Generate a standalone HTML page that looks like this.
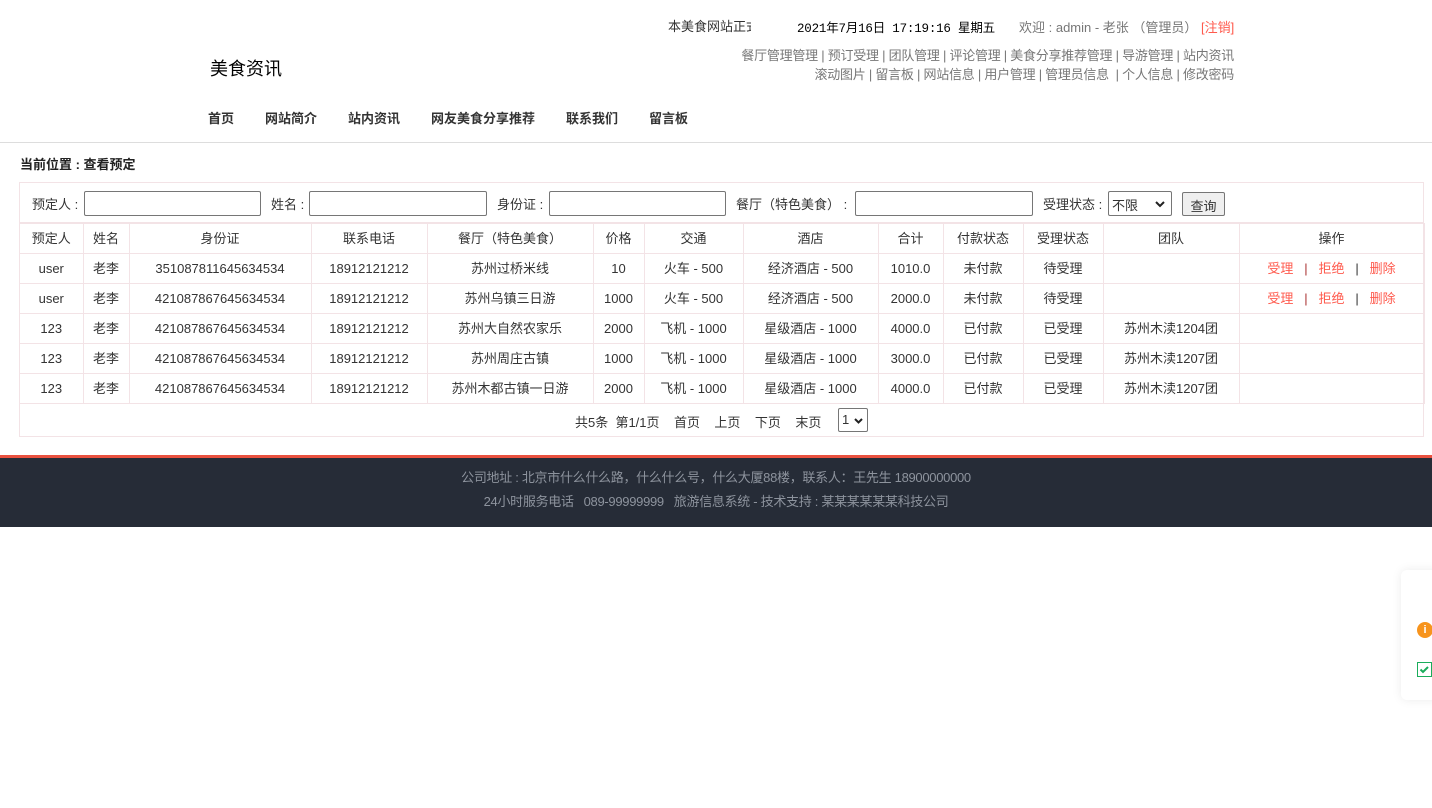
<!DOCTYPE html>
<html><head><meta charset="utf-8">
<style>
*{margin:0;padding:0;box-sizing:border-box}
body{width:1432px;height:808px;background:#fff;font-family:"Liberation Sans","Microsoft YaHei","Noto Sans CJK SC",sans-serif;font-size:13px;color:#333;position:relative;overflow:hidden}
.a{position:absolute;white-space:nowrap}
.gray{color:#777}
.nav span{position:absolute;top:108px;font-size:13px;font-weight:bold;color:#333}
.box{position:absolute;left:19px;top:182px;width:1405px;height:255px;border:1px solid #f3e3e6}
.srch{position:absolute;top:0;left:0;width:1403px;height:40px;border-bottom:1px solid #f3e3e6}
.srch input{position:absolute;top:8px;height:25px;border:1px solid #767676;border-radius:2px;background:#fff}
.srch .l{position:absolute;top:12px;font-size:13px;color:#333}
table{position:absolute;left:0;top:40px;border-collapse:collapse;table-layout:fixed;width:1404px}
td{border:1px solid #f3e3e6;height:30px;text-align:center;font-size:13px;color:#333;padding:0;line-height:28px}
table tr td:first-child{border-left:none}
.op{color:#ff5a4d}
.pg{position:absolute;left:0;top:221px;width:1403px;height:32px;text-align:center;font-size:13px;color:#333}
.ft{position:absolute;left:0;top:455px;width:1432px;height:72px;background:#262c37;border-top:3px solid #e9513f;color:#8d939d;text-align:center;font-size:13px;letter-spacing:-0.3px}
</style></head><body>
<div class="a" style="left:668px;top:16px;color:#333;width:83px;overflow:hidden">本美食网站正式</div>
<div class="a" style="left:797px;top:17px;color:#000;font-family:'Liberation Mono','Noto Sans CJK SC',monospace;font-size:12.5px;letter-spacing:-0.2px">2021年7月16日 17:19:16 星期五</div>
<div class="a gray" style="left:1019px;top:17px">欢迎 : admin - 老张 （管理员） <span style="color:#ff5a4d">[注销]</span></div>
<div class="a gray" style="right:198px;top:45px;letter-spacing:-0.25px">餐厅管理管理 | 预订受理 | 团队管理 | 评论管理 | 美食分享推荐管理 | 导游管理 | 站内资讯</div>
<div class="a gray" style="right:198px;top:64px;letter-spacing:-0.25px">滚动图片 | 留言板 | 网站信息 | 用户管理 | 管理员信息 &nbsp;| 个人信息 | 修改密码</div>
<div class="a" style="left:210px;top:55px;font-size:18px;color:#000">美食资讯</div>
<div class="nav"><span style="left:208px">首页</span><span style="left:265px">网站简介</span><span style="left:348px">站内资讯</span><span style="left:431px">网友美食分享推荐</span><span style="left:566px">联系我们</span><span style="left:649px">留言板</span></div>
<div class="a" style="left:0;top:142px;width:1432px;height:1px;background:#ddd"></div>
<div class="a" style="left:20px;top:154px;font-weight:bold;color:#222">当前位置 : 查看预定</div>
<div class="box">
<div class="srch">
<span class="l" style="left:12px;top:11px">预定人 :</span><input style="left:64px;width:177px;top:8px;height:25px">
<span class="l" style="left:251px;top:11px">姓名 :</span><input style="left:289px;width:178px">
<span class="l" style="left:477px;top:11px">身份证 :</span><input style="left:529px;width:177px">
<span class="l" style="left:716px;top:11px">餐厅（特色美食） :</span><input style="left:835px;width:178px">
<span class="l" style="left:1023px;top:11px">受理状态 :</span>
<div class="a" style="left:1088px;top:8px;width:64px;height:25px;border:1px solid #767676;border-radius:2px;padding:3px 0 0 3px">不限<svg style="position:absolute;right:6px;top:9px" width="10" height="7" viewBox="0 0 10 7"><path d="M1 1l4 4 4-4" stroke="#222" stroke-width="2" fill="none"/></svg></div>
<div class="a" style="left:1162px;top:9px;width:43px;height:24px;border:1px solid #767676;border-radius:2px;background:#efefef;text-align:center;padding-top:3px">查询</div>
</div>
<table>
<colgroup><col style="width:63px"><col style="width:46px"><col style="width:182px"><col style="width:116px"><col style="width:166px"><col style="width:51px"><col style="width:99px"><col style="width:135px"><col style="width:65px"><col style="width:80px"><col style="width:80px"><col style="width:136px"><col style="width:185px"></colgroup>
<tr><td>预定人</td><td>姓名</td><td>身份证</td><td>联系电话</td><td>餐厅（特色美食）</td><td>价格</td><td>交通</td><td>酒店</td><td>合计</td><td>付款状态</td><td>受理状态</td><td>团队</td><td>操作</td></tr>
<tr><td>user</td><td>老李</td><td>351087811645634534</td><td>18912121212</td><td>苏州过桥米线</td><td>10</td><td>火车 - 500</td><td>经济酒店 - 500</td><td>1010.0</td><td>未付款</td><td>待受理</td><td></td><td><span class="op">受理</span> &nbsp; <span style="color:#a33">|</span> &nbsp; <span class="op">拒绝</span> &nbsp; | &nbsp; <span class="op">删除</span></td></tr>
<tr><td>user</td><td>老李</td><td>421087867645634534</td><td>18912121212</td><td>苏州乌镇三日游</td><td>1000</td><td>火车 - 500</td><td>经济酒店 - 500</td><td>2000.0</td><td>未付款</td><td>待受理</td><td></td><td><span class="op">受理</span> &nbsp; <span style="color:#a33">|</span> &nbsp; <span class="op">拒绝</span> &nbsp; | &nbsp; <span class="op">删除</span></td></tr>
<tr><td>123</td><td>老李</td><td>421087867645634534</td><td>18912121212</td><td>苏州大自然农家乐</td><td>2000</td><td>飞机 - 1000</td><td>星级酒店 - 1000</td><td>4000.0</td><td>已付款</td><td>已受理</td><td>苏州木渎1204团</td><td></td></tr>
<tr><td>123</td><td>老李</td><td>421087867645634534</td><td>18912121212</td><td>苏州周庄古镇</td><td>1000</td><td>飞机 - 1000</td><td>星级酒店 - 1000</td><td>3000.0</td><td>已付款</td><td>已受理</td><td>苏州木渎1207团</td><td></td></tr>
<tr><td>123</td><td>老李</td><td>421087867645634534</td><td>18912121212</td><td>苏州木都古镇一日游</td><td>2000</td><td>飞机 - 1000</td><td>星级酒店 - 1000</td><td>4000.0</td><td>已付款</td><td>已受理</td><td>苏州木渎1207团</td><td></td></tr>
</table>
<div class="a" style="left:555px;top:229px;font-size:13px;color:#333">共5条 &nbsp;第1/1页 &nbsp; &nbsp;首页 &nbsp; &nbsp;上页 &nbsp; &nbsp;下页 &nbsp; &nbsp;末页</div>
<div class="a" style="left:818px;top:225px;width:30px;height:24px;border:1px solid #767676;border-radius:2px;padding:3px 0 0 3px">1<svg style="position:absolute;right:4px;top:9px" width="9" height="6" viewBox="0 0 9 6"><path d="M1 1l3.5 3.5L8 1" stroke="#222" stroke-width="2" fill="none"/></svg></div>
</div>
<div class="ft"><div style="position:absolute;top:9px;width:100%">公司地址 : 北京市什么什么路，什么什么号，什么大厦88楼，联系人：王先生 18900000000</div><div style="position:absolute;top:33px;width:100%">24小时服务电话 &nbsp; 089-99999999 &nbsp; 旅游信息系统 - 技术支持 : 某某某某某某科技公司</div></div>
<div class="a" style="left:1401px;top:570px;width:40px;height:130px;background:#fff;border-radius:6px;box-shadow:0 0 10px rgba(0,0,0,0.08)">
<div class="a" style="left:16px;top:52px;width:16px;height:16px;border-radius:50%;background:#f7941d;color:#fff;font-size:11px;font-weight:bold;text-align:center;line-height:16px">i</div>
<svg class="a" style="left:16px;top:92px" width="15" height="15" viewBox="0 0 15 15"><rect x="0.5" y="0.5" width="14" height="14" fill="#fff" stroke="#1aad5b"/><path d="M3.5 7.5l2.5 2.5 5-5" stroke="#1aad5b" stroke-width="2" fill="none"/></svg>
</div>
</body></html>
